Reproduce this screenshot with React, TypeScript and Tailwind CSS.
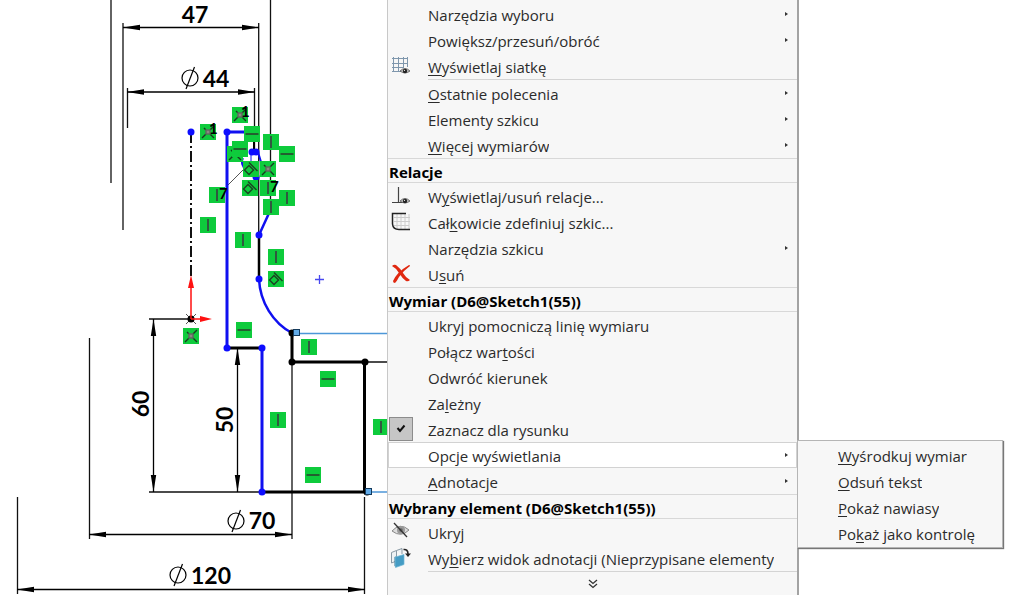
import type { ReactNode } from 'react'

type Glyph = 'v' | 'h' | 'fix' | 'tan'

const relations: { x: number; y: number; g: Glyph; tag?: string }[] = [
  { x: 240, y: 115, g: 'fix', tag: '1' },
  { x: 208, y: 132, g: 'fix', tag: '1' },
  { x: 235, y: 154, g: 'fix' },
  { x: 240, y: 149, g: 'h' },
  { x: 252, y: 134, g: 'h' },
  { x: 271, y: 142, g: 'v' },
  { x: 287, y: 154, g: 'h' },
  { x: 251, y: 169, g: 'tan' },
  { x: 268, y: 169, g: 'fix' },
  { x: 250, y: 188, g: 'tan' },
  { x: 268, y: 188, g: 'v', tag: '7' },
  { x: 217, y: 195, g: 'v', tag: '7' },
  { x: 287, y: 198, g: 'v' },
  { x: 271, y: 207, g: 'v' },
  { x: 208, y: 225, g: 'v' },
  { x: 243, y: 240, g: 'v' },
  { x: 276, y: 257, g: 'v' },
  { x: 276, y: 279, g: 'tan' },
  { x: 244, y: 330, g: 'h' },
  { x: 191, y: 336, g: 'fix' },
  { x: 309, y: 347, g: 'v' },
  { x: 328, y: 379, g: 'h' },
  { x: 278, y: 420, g: 'v' },
  { x: 313, y: 475, g: 'h' },
  { x: 381, y: 427, g: 'v' },
]

const bluePoints = [
  [191, 132], [227, 132], [252, 152], [256, 152], [256, 177],
  [259, 235], [259, 279], [227, 348], [262, 348], [262, 492],
]

const blackPoints = [[292, 333], [292, 362], [365, 362], [367, 492]]

function Relation({ x, y, g, tag }: { x: number; y: number; g: Glyph; tag?: string }) {
  return (
    <g transform={`translate(${x} ${y})`}>
      <rect x="-8" y="-8" width="16" height="16" fill="#0ecb3c" />
      {g === 'v' && <path d="M0 -6V6" stroke="#3d3340" strokeWidth="1.5" />}
      {g === 'h' && <path d="M-6.5 0H6.5" stroke="#2b3a2c" strokeWidth="1.5" />}
      {g === 'fix' && (
        <g stroke="#173a1f" strokeWidth="1.4" fill="none">
          <path d="M-6 6L-2 2M6 -6L2 -2M-4 -4L-2 -2M2 2L6 6" />
          <rect x="-2" y="-2" width="4" height="4" fill="#8a8a80" stroke="#5f665f" />
        </g>
      )}
      {g === 'tan' && (
        <g stroke="#1d4023" strokeWidth="1.4" fill="none">
          <path d="M-2 -3.5L2.5 1L-2 5.5L-6.5 1Z" />
          <path d="M-2 -6.5L6.5 2" />
        </g>
      )}
      {tag && (
        <text x={tag === '7' ? 2 : 1} y={tag === '7' ? 4 : 2} fontSize="15" fontWeight="700" className="font-['Lato',sans-serif]">
          {tag}
        </text>
      )}
    </g>
  )
}

function HDim({ x1, x2, y }: { x1: number; x2: number; y: number }) {
  return (
    <g>
      <path d={`M${x1} ${y}H${x2}`} stroke="#000" strokeWidth="1.5" />
      <path d={`M${x1} ${y}l17 -2.7v5.4zM${x2} ${y}l-17 -2.7v5.4z`} />
    </g>
  )
}

function VDim({ x, y1, y2 }: { x: number; y1: number; y2: number }) {
  return (
    <g>
      <path d={`M${x} ${y1}V${y2}`} stroke="#000" strokeWidth="1.3" />
      <path d={`M${x} ${y1}l-2.7 17h5.4zM${x} ${y2}l-2.7 -17h5.4z`} />
    </g>
  )
}

function Diameter({ x, y }: { x: number; y: number }) {
  return (
    <g fill="none" stroke="#000" strokeWidth="1.2">
      <circle cx={x} cy={y} r="8" />
      <path d={`M${x - 4} ${y + 11}l8.5 -22`} />
    </g>
  )
}

function Sketch() {
  return (
    <svg viewBox="0 0 387 595" className="block w-full" role="img" aria-label="Sketch1">
      {/* extension lines */}
      <g stroke="#111" strokeWidth="1.3" fill="none">
        <path d="M111 0V183M270.5 0V212M123 23V230M258.7 23V235M127.5 88V128M254.5 88V150" />
        <path d="M89.5 338V539M292 362V539M17.5 497V594M364.5 497V594" />
        <path d="M149 319H190M149 492H262M365 362H387" />
        <path d="M228 185L246 167" stroke="#555" strokeWidth="1" />
      </g>

      <HDim x1={123} x2={259} y={27.5} />
      <HDim x1={127} x2={255} y={92} />
      <HDim x1={89} x2={292} y={534.5} />
      <HDim x1={17} x2={365} y={589.5} />
      <VDim x={153.5} y1={319} y2={492} />
      <VDim x={237.5} y1={348} y2={492} />

      <Diameter x={190} y={78} />
      <Diameter x={236} y={521} />
      <Diameter x={178} y={575} />

      <g fontSize="23" fontWeight="700" textAnchor="middle" className="font-['Lato',sans-serif]">
        <text x="195" y="23">47</text>
        <text x="216" y="87">44</text>
        <text x="262" y="529">70</text>
        <text x="211" y="584">120</text>
        <text transform="translate(149 404) rotate(-90)">60</text>
        <text transform="translate(233 420) rotate(-90)">50</text>
      </g>

      {/* profile */}
      <path d="M191 132V276" stroke="#111" strokeWidth="2" strokeDasharray="11 3 2 3" />
      <g fill="none" stroke="#000" strokeWidth="3">
        <path d="M227 348H262M262 492H367M364.5 492V362H292V333" />
        <path d="M259 235V279" strokeWidth="2.5" />
      </g>
      <g fill="none" stroke="#1010f0" strokeWidth="3">
        <path d="M254 132H227V348M262 348V492" />
        <path d="M254 132V152" stroke="#000" strokeWidth="2" />
        <path d="M259 235L270 211M259 279C260 302 273 323 292 333" strokeWidth="2.5" />
        <path d="M243 158C241 162 242 167 246 169M258 152L261 162" strokeWidth="2" />
        <path d="M251 152V162" strokeWidth="1" />
      </g>
      <path d="M315 279.5H324M319.5 275V284" stroke="#4848f0" strokeWidth="1.3" />
      <path d="M299 333.5H387M371 492H387" stroke="#4d97d8" strokeWidth="1.3" />

      {bluePoints.map(([x, y]) => (
        <circle key={`${x}-${y}`} cx={x} cy={y} r="3.5" fill="#0d0dff" />
      ))}
      {blackPoints.map(([x, y]) => (
        <circle key={`${x}-${y}`} cx={x} cy={y} r="3.5" />
      ))}
      <g fill="#62abe8" stroke="#143a5c">
        <rect x="293.5" y="329.5" width="6" height="6" />
        <rect x="365.5" y="488.5" width="6" height="6" />
      </g>

      {/* origin */}
      <path d="M186 314L196 324M196 314L186 324" stroke="#555" strokeWidth="1" />
      <circle cx="191" cy="319" r="3.5" />
      <path d="M191 319V286M191 319H202" stroke="#f11" strokeWidth="1.5" />
      <path d="M191 275l-3 13h6zM212 319l-12 -3v6z" fill="#f11" />

      {relations.map((r) => (
        <Relation key={`${r.x}-${r.y}`} {...r} />
      ))}
    </svg>
  )
}

function Eye({ x, y }: { x: number; y: number }) {
  return (
    <g transform={`translate(${x} ${y})`}>
      <path d="M-5 0Q0 -5 5 0Q0 4 -5 0Z" fill="#bbb" stroke="#555" strokeWidth=".8" />
      <circle r="2.2" fill="#222" />
      <circle cx="-.5" cy="-.7" r=".6" fill="#fff" />
    </g>
  )
}

function GridIcon() {
  return (
    <svg width="20" height="20" viewBox="0 0 20 20" fill="none">
      <path d="M2.5 1V16M7.5 1V16M12.5 1V12M16.5 1V11M1 2.5H17M1 7.5H17M1 11.5H12M1 15.5H10" stroke="#7f97ad" />
      <Eye x={14} y={15} />
    </svg>
  )
}

function RelationsIcon() {
  return (
    <svg width="20" height="20" viewBox="0 0 20 20" fill="none">
      <path d="M7.5 1V16M1 16.5H12" stroke="#444" strokeWidth="1.2" />
      <Eye x={14} y={15} />
    </svg>
  )
}

function DefineIcon() {
  return (
    <svg width="20" height="20" viewBox="0 0 20 20" fill="none">
      <path d="M6 2V17M10 2V17M14 2V17M18 2V17M3 5.5H19M3 9.5H19M3 13.5H18" stroke="#ccc" />
      <path d="M15 1.5H1.5V12Q2 17.5 8 17.5H19" stroke="#222" strokeWidth="1.5" />
    </svg>
  )
}

function DeleteIcon() {
  return (
    <svg width="20" height="20" viewBox="0 0 20 20" fill="#e02810">
      <path d="M1 2Q3 0 5 1Q9 4 12 9Q15 14 19 16Q17 18 15 17Q11 14 8 9Q5 4 1 2Z" />
      <path d="M18 1Q19 1 19 2Q12 7 8 13Q6 17 4 19Q2 19 2 17Q6 8 18 1Z" />
    </svg>
  )
}

function HideIcon() {
  return (
    <svg width="20" height="20" viewBox="0 0 20 20" fill="none">
      <path d="M1 9Q9 0 18 8Q10 16 1 9Z" fill="#ddd" stroke="#888" />
      <circle cx="10" cy="8" r="4" fill="#999" />
      <circle cx="10" cy="8" r="1.8" fill="#666" />
      <path d="M3 1L16 15" stroke="#333" strokeWidth="1.3" />
    </svg>
  )
}

function ViewIcon() {
  return (
    <svg width="20" height="20" viewBox="0 0 20 20" fill="none">
      <path d="M.5 4.5L5.500 2.500V13L.5 15ZM5.500 2.500L11 .5V6" stroke="#8a9aa5" fill="#eef2f4" />
      <path d="M3.500 9L5 8.500V19L3.500 18Z" fill="#2b7598" />
      <path d="M4.500 9L13 6.500V16.500L4.500 19.500Z" fill="#459cc4" stroke="#6db6d6" strokeWidth=".7" />
      <path d="M12.500 1.500Q17 1 17 6" stroke="#222" strokeWidth="1.600" />
      <path d="M14 5.500H20L17 9Z" fill="#222" />
    </svg>
  )
}

interface ItemProps {
  children: ReactNode
  icon?: ReactNode
  more?: boolean
  active?: boolean
}

function Item({ children, icon, more, active }: ItemProps) {
  return (
    <button
      type="button"
      role="menuitem"
      aria-haspopup={more ? 'menu' : undefined}
      className={`flex h-[26px] w-full items-center pr-2 text-left ${active ? 'bg-white outline-1 -outline-offset-1 outline-[#d2d2d2]' : ''}`}
    >
      <span className="flex w-10 shrink-0 pl-[3px]">{icon}</span>
      <span className="max-w-[348px] overflow-hidden pt-0.5 whitespace-nowrap">{children}</span>
      {more && (
        <svg width="4" height="6" viewBox="0 0 4 6" className="ml-auto shrink-0" fill="#333">
          <path d="M0 1L3 3L0 5Z" />
        </svg>
      )}
    </button>
  )
}

function Heading({ children }: { children: ReactNode }) {
  return (
    <h2 className="flex h-[25px] items-center border-y border-[#d8d8d8] pt-0.5 pl-px font-bold text-black">
      {children}
    </h2>
  )
}

function Divider() {
  return <div role="separator" className="ml-10 h-px bg-[#d4d4d4]" />
}

function CheckItem({ children }: { children: ReactNode }) {
  return (
    <label className="flex h-[26px] items-center">
      <span className="relative flex w-10 shrink-0 pl-px">
        <input
          type="checkbox"
          defaultChecked
          className="peer h-6 w-6 appearance-none border border-[#8c8c8c] bg-[#c6c6c6]"
        />
        <svg
          viewBox="0 0 24 24"
          className="pointer-events-none absolute top-0 left-px hidden h-6 w-6 peer-checked:block"
          fill="none"
        >
          <path d="M8.5 11L11 14L15.5 8.5" stroke="#111" strokeWidth="2" />
        </svg>
      </span>
      <span className="pt-0.5">{children}</span>
    </label>
  )
}

function Submenu() {
  return (
    <div
      role="menu"
      className="absolute -top-0.5 left-full z-10 w-[206px] border border-[#b5b5b5] bg-[#f7f7f7] pt-px pb-px shadow-[1px_1px_1px_#777]"
    >
      <Item><u>W</u>yśrodkuj wymiar</Item>
      <Item><u>O</u>dsuń tekst</Item>
      <Item><u>P</u>okaż nawiasy</Item>
      <Item>Po<u>k</u>aż jako kontrolę</Item>
    </div>
  )
}

export default function App() {
  return (
    <main className="grid h-screen grid-cols-[387px_412px_1fr] overflow-hidden bg-white font-['Open_Sans','Noto_Sans',sans-serif] text-[15px] leading-6 text-[#2b2b2b] [&_u]:decoration-1 [&_u]:underline-offset-2">
      <section>
        <Sketch />
      </section>

      <nav
        role="menu"
        className="min-h-screen border-r-2 border-l border-r-[#a3a3a3] border-l-[#c8c8c8] bg-[#f7f7f7] pt-px"
      >
        <Item more>Narzędzia wyboru</Item>
        <Item more>Powiększ/przesuń/obróć</Item>
        <Item icon={<GridIcon />}><u>W</u>yświetlaj siatkę</Item>
        <Divider />
        <Item more><u>O</u>statnie polecenia</Item>
        <Item more>Elementy szkicu</Item>
        <Item more><u>W</u>ięcej wymiarów</Item>

        <Heading>Relacje</Heading>
        <Item icon={<RelationsIcon />}>W<u>y</u>świetlaj/usuń relacje...</Item>
        <Item icon={<DefineIcon />}>Cał<u>k</u>owicie zdefiniuj szkic...</Item>
        <Item more>Narzędzia szkicu</Item>
        <Item icon={<DeleteIcon />}>U<u>s</u>uń</Item>

        <Heading>Wymiar (D6@Sketch1(55))</Heading>
        <Item>Ukryj pomocniczą linię wymiaru</Item>
        <Item>Połącz war<u>t</u>ości</Item>
        <Item>Odwróć kierunek</Item>
        <Item>Za<u>l</u>eżny</Item>
        <CheckItem>Zaznacz dla rysunku</CheckItem>
        <div className="relative">
          <Item more active>Opcje wyświetlania</Item>
          <Submenu />
        </div>
        <Item more><u>A</u>dnotacje</Item>

        <Heading>Wybrany element (D6@Sketch1(55))</Heading>
        <Item icon={<HideIcon />}>Ukryj</Item>
        <Item icon={<ViewIcon />}>Wy<u>b</u>ierz widok adnotacji (Nieprzypisane elementy</Item>
        <Divider />
        <button type="button" aria-label="Więcej" className="flex h-6 w-full items-center justify-center">
          <svg width="10" height="10" viewBox="0 0 10 10" fill="none" stroke="#333" strokeWidth="1.3">
            <path d="M1 1L5 4.5L9 1M1 5L5 8.5L9 5" />
          </svg>
        </button>
      </nav>
    </main>
  )
}
